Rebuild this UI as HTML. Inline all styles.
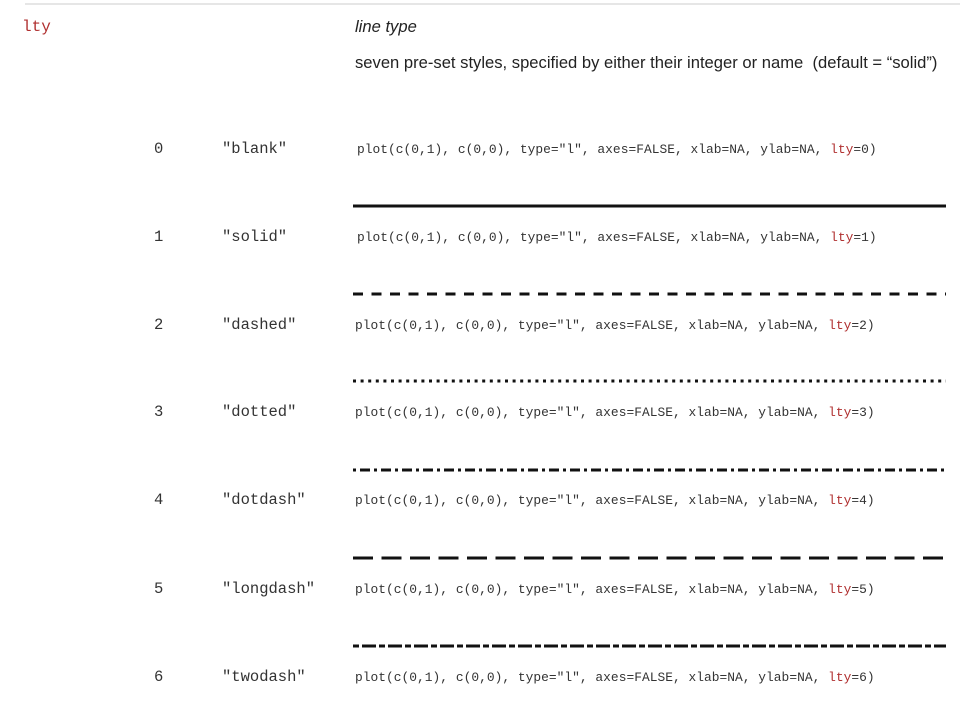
<!DOCTYPE html>
<html><head><meta charset="utf-8"><style>
body{margin:0;width:960px;height:720px;background:#fff;position:relative;overflow:hidden;font-family:"Liberation Sans",sans-serif;color:#222}
.a{position:absolute;white-space:nowrap}
.m{font-family:"Liberation Mono",monospace}
.lab{font-size:15.5px;color:#333}
.code{font-size:12.9px;color:#333;letter-spacing:0.02px}
.r{color:#b03030}
</style></head><body>
<div class="a" style="left:25px;top:3px;width:935px;height:2px;background:#e6e6e6"></div>
<div class="a m r" style="left:22px;top:18px;font-size:16px">lty</div>
<div class="a" style="left:355px;top:17px;font-size:16.6px;font-style:italic">line type</div>
<div class="a" style="left:355px;top:53px;font-size:16.6px">seven pre-set styles, specified by either their integer or name&nbsp; (default = “solid”)</div>

<div class="a m lab" style="left:154px;top:140px">0</div><div class="a m lab" style="left:222px;top:140px">"blank"</div>
<div class="a m code" style="left:357px;top:142px">plot(c(0,1), c(0,0), type="l", axes=FALSE, xlab=NA, ylab=NA, <span class="r">lty</span>=0)</div>

<div class="a m lab" style="left:154px;top:228px">1</div><div class="a m lab" style="left:222px;top:228px">"solid"</div>
<div class="a m code" style="left:357px;top:230px">plot(c(0,1), c(0,0), type="l", axes=FALSE, xlab=NA, ylab=NA, <span class="r">lty</span>=1)</div>

<div class="a m lab" style="left:154px;top:316px">2</div><div class="a m lab" style="left:222px;top:316px">"dashed"</div>
<div class="a m code" style="left:355px;top:318px">plot(c(0,1), c(0,0), type="l", axes=FALSE, xlab=NA, ylab=NA, <span class="r">lty</span>=2)</div>

<div class="a m lab" style="left:154px;top:403px">3</div><div class="a m lab" style="left:222px;top:403px">"dotted"</div>
<div class="a m code" style="left:355px;top:405px">plot(c(0,1), c(0,0), type="l", axes=FALSE, xlab=NA, ylab=NA, <span class="r">lty</span>=3)</div>

<div class="a m lab" style="left:154px;top:491px">4</div><div class="a m lab" style="left:222px;top:491px">"dotdash"</div>
<div class="a m code" style="left:355px;top:493px">plot(c(0,1), c(0,0), type="l", axes=FALSE, xlab=NA, ylab=NA, <span class="r">lty</span>=4)</div>

<div class="a m lab" style="left:154px;top:580px">5</div><div class="a m lab" style="left:222px;top:580px">"longdash"</div>
<div class="a m code" style="left:355px;top:582px">plot(c(0,1), c(0,0), type="l", axes=FALSE, xlab=NA, ylab=NA, <span class="r">lty</span>=5)</div>

<div class="a m lab" style="left:154px;top:668px">6</div><div class="a m lab" style="left:222px;top:668px">"twodash"</div>
<div class="a m code" style="left:355px;top:670px">plot(c(0,1), c(0,0), type="l", axes=FALSE, xlab=NA, ylab=NA, <span class="r">lty</span>=6)</div>

<svg class="a" style="left:0;top:0" width="960" height="720">
<g stroke="#111" stroke-width="3" fill="none">
<line x1="353" y1="206" x2="946" y2="206"/>
<line x1="353" y1="294" x2="946" y2="294" stroke-dasharray="10 8.5"/>
<line x1="353" y1="381" x2="946" y2="381" stroke-dasharray="3 4.6"/>
<line x1="353" y1="470" x2="946" y2="470" stroke-dasharray="3 4 10 4"/>
<line x1="353" y1="558" x2="946" y2="558" stroke-dasharray="20 8.5"/>
<line x1="353" y1="646" x2="946" y2="646" stroke-dasharray="6 3 14 3"/>
</g></svg>
</body></html>
